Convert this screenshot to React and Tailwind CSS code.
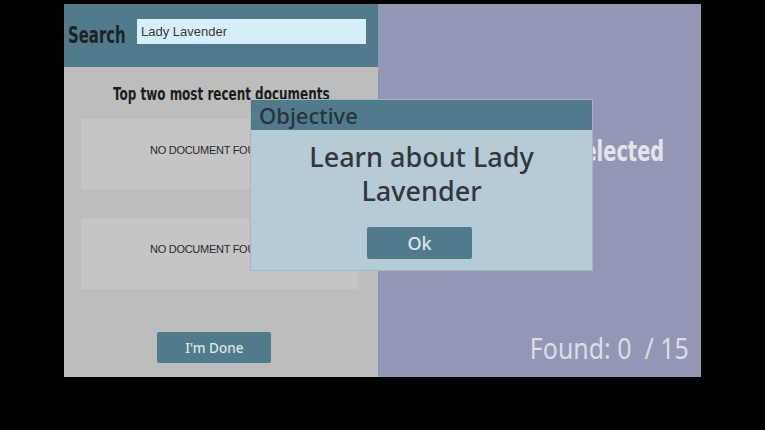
export default function App() {
  const cond = { fontFamily: '"DejaVu Sans Condensed", "DejaVu Sans", sans-serif' };
  return (
    <div className="w-[765px] h-[430px] bg-black relative overflow-hidden">
      <div className="absolute left-[64px] top-[4px] w-[637px] h-[373px] flex">
        {/* Left panel */}
        <div className="w-[314px] shrink-0 h-full flex flex-col bg-[#bdbdbd]">
          <div className="h-[63px] bg-[#517b8b] flex items-center pl-[4px]">
            <span
              className="text-[23px] font-bold text-[#1c2327] inline-block origin-left scale-x-[0.72] w-[60px] whitespace-nowrap"
              style={cond}
            >
              Search
            </span>
            <div className="ml-[9px] w-[229px] h-[25px] bg-[#d7effb] flex items-center pl-[4px] -mt-[8px]">
              <span className="text-[13px] text-[#3a3a3a]" style={{ fontFamily: '"Liberation Sans", Arial, sans-serif' }}>
                Lady Lavender
              </span>
            </div>
          </div>
          <div className="flex flex-col flex-1">
            <div className="h-[52px] flex items-center justify-center">
              <span
                className="text-[18px] font-bold text-[#1c1c1c] inline-block scale-x-[0.74] whitespace-nowrap"
                style={cond}
              >
                Top two most recent documents
              </span>
            </div>
            <div className="ml-[17px] w-[277px] h-[70px] bg-[#c5c5c5] pt-[17px] pl-[69px]">
              <span className="text-[11px] text-[#2a2a2a] tracking-tight" style={{ fontFamily: '"Liberation Sans", Arial, sans-serif' }}>
                NO DOCUMENT FOUND
              </span>
            </div>
            <div className="ml-[17px] mt-[29px] w-[277px] h-[71px] bg-[#c5c5c5] pt-[17px] pl-[69px]">
              <span className="text-[11px] text-[#2a2a2a] tracking-tight" style={{ fontFamily: '"Liberation Sans", Arial, sans-serif' }}>
                NO DOCUMENT FOUND
              </span>
            </div>
            <div className="ml-[93px] mt-[43px] w-[114px] h-[31px] bg-[#517b8b] rounded-[2px] flex items-center justify-center">
              <span className="text-[15px] font-medium text-[#d9e6ec] inline-block scale-x-[0.9]" style={{ fontFamily: '"Noto Sans", sans-serif' }}>
                I'm Done
              </span>
            </div>
          </div>
        </div>
        {/* Right panel */}
        <div className="flex-1 min-w-0 h-full bg-[#9497b4] flex flex-col">
          <div className="mt-[128px] h-[40px] flex items-center justify-center">
            <span
              className="text-[28px] font-bold text-[#e4e4ee] inline-block scale-x-[0.77] whitespace-nowrap"
              style={cond}
            >
              No Document Selected
            </span>
          </div>
          <div className="mt-auto mb-[8px] flex justify-end pr-[12px]">
            <span className="text-[29px] text-[#dcdde8] whitespace-nowrap inline-block origin-right scale-x-[0.86]" style={{ fontFamily: '"Noto Sans", sans-serif' }}>
              Found: 0 &nbsp;/ 15
            </span>
          </div>
        </div>
      </div>
      {/* Modal */}
      <div className="absolute left-[250px] top-[99px] w-[343px] h-[172px] bg-[#b6cbd8] border border-[#a3b8c5] flex flex-col">
        <div className="h-[30px] bg-[#517b8b] flex items-center pl-[8px]">
          <span className="text-[22px] text-[#26343b] font-medium" style={{ fontFamily: '"Noto Sans", sans-serif' }}>
            Objective
          </span>
        </div>
        <div className="flex flex-col items-center pt-[10px]">
          <div className="text-[27px] leading-[34px] text-[#333739] text-center font-medium w-[260px]" style={{ fontFamily: '"Noto Sans", sans-serif' }}>
            Learn about Lady Lavender
          </div>
          <div className="mt-[19px] w-[105px] h-[32px] bg-[#517b8b] rounded-[2px] flex items-center justify-center -ml-[4px]">
            <span className="text-[18px] font-medium text-[#d7e6ee]" style={{ fontFamily: '"Noto Sans", sans-serif' }}>
              Ok
            </span>
          </div>
        </div>
      </div>
    </div>
  );
}
